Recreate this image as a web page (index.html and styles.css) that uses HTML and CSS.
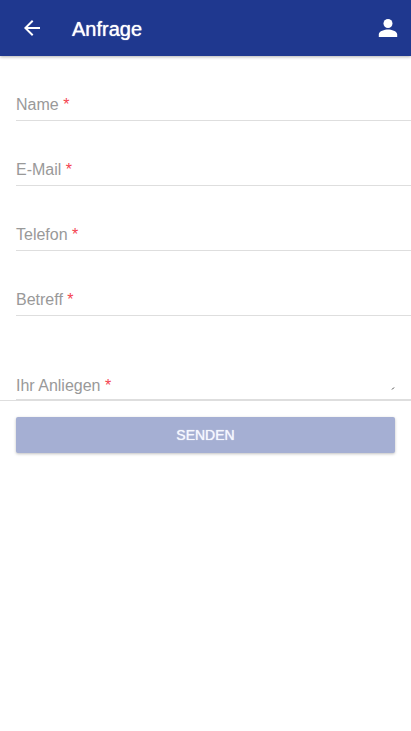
FILE: index.html
```html
<!DOCTYPE html>
<html lang="de">
<head>
<meta charset="utf-8">
<meta name="viewport" content="width=device-width, initial-scale=1">
<title>Anfrage</title>
<link rel="stylesheet" href="styles.css">
</head>
<body>
<header class="toolbar">
  <button class="icon-button" type="button" aria-label="Zurück">
    <svg viewBox="0 0 24 24" width="24" height="24"><path d="M20 11H7.8l5.600-5.600L12 4l-8 8 8 8 1.400-1.400L7.800 13H20z"/></svg>
  </button>
  <h1 class="title">Anfrage</h1>
  <button class="icon-button" type="button" aria-label="Profil">
    <svg viewBox="0 0 20 20" width="20" height="20"><circle cx="10" cy="5.500" r="4.500"/><path d="M10 11.500c-3.200 0-9.200 1.500-9.200 4.800V19h18.400v-2.700c0-3.300-6-4.800-9.200-4.800z"/></svg>
  </button>
</header>
<form>
  <div class="field">
    <label for="name">Name <span class="required">*</span></label>
    <input id="name" type="text" required>
  </div>
  <div class="field">
    <label for="email">E-Mail <span class="required">*</span></label>
    <input id="email" type="email" required>
  </div>
  <div class="field">
    <label for="phone">Telefon <span class="required">*</span></label>
    <input id="phone" type="tel" required>
  </div>
  <div class="field">
    <label for="subject">Betreff <span class="required">*</span></label>
    <input id="subject" type="text" required>
  </div>
  <div class="message">
    <div class="field field-tall">
      <label for="message">Ihr Anliegen <span class="required">*</span></label>
      <textarea id="message" required></textarea>
      <svg class="grip" viewBox="0 0 4 4" width="4" height="4" aria-hidden="true"><path d="M1 3.500L3 1.500" /></svg>
    </div>
  </div>
  <button class="submit" type="submit" disabled>SENDEN</button>
</form>
</body>
</html>
```
FILE: styles.css
```css
* {
  box-sizing: border-box;
}

body {
  margin: 0;
  background: #fff;
  font-family: "Liberation Sans", Arial, sans-serif;
  font-size: 16px;
  line-height: 18px;
}

.toolbar {
  display: flex;
  align-items: center;
  height: 56px;
  padding: 0 8px 0 20px;
  background: #1f388f;
  color: #fff;
  box-shadow: 0 1px 3px rgba(0, 0, 0, 0.3);
}

.icon-button {
  display: flex;
  padding: 0;
  border: 0;
  background: none;
  fill: #fff;
}

.icon-button:last-child {
  margin-right: 5px;
}

.title {
  flex: 1;
  margin: 2px 0 0 28px;
  font-size: 20px;
  line-height: 24px;
  font-weight: 400;
  text-shadow: 0 0 1px #fff;
}

.field {
  display: grid;
  align-items: end;
  height: 65px;
  margin-left: 16px;
  padding-bottom: 6px;
  border-bottom: 1px solid #dedede;
}

.field > * {
  grid-area: 1 / 1;
}

.field label {
  color: #999;
}

.required {
  color: #f4434f;
}

.field input,
.field textarea {
  width: 100%;
  height: 24px;
  margin: 0;
  padding: 0;
  border: 0;
  outline: 0;
  resize: none;
  background: transparent;
  font: inherit;
}

.message {
  border-bottom: 1px solid #dedede;
}

.field-tall {
  height: 84px;
  padding-bottom: 4px;
}

.grip {
  justify-self: end;
  margin: 0 16px 5px 0;
  fill: none;
  stroke: #444;
}

.submit {
  display: block;
  width: calc(100% - 32px);
  height: 36px;
  margin: 16px;
  padding: 0;
  border: 0;
  border-radius: 2px;
  background: #a5afd3;
  box-shadow: 0 1px 3px rgba(0, 0, 0, 0.25);
  color: #f6f8ff;
  font: inherit;
  font-size: 14px;
  text-shadow: 0 0 1px #f6f8ff;
}
```
